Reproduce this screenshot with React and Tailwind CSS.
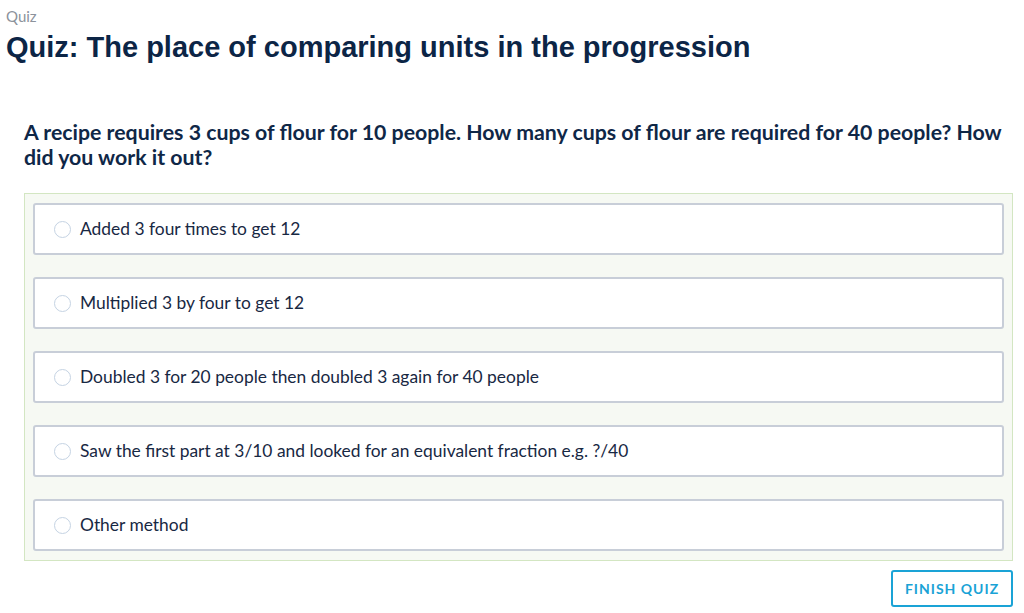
import React, { useState } from "react";

const options = [
  "Added 3 four times to get 12",
  "Multiplied 3 by four to get 12",
  "Doubled 3 for 20 people then doubled 3 again for 40 people",
  "Saw the first part at 3/10 and looked for an equivalent fraction e.g. ?/40",
  "Other method",
];

export default function App() {
  const [selected, setSelected] = useState(null);

  return (
    <div className="w-[1024px] h-[613px] bg-white overflow-hidden font-['Lato',sans-serif]">
      {/* Breadcrumb + title */}
      <div className="px-[6px] pt-[7px]">
        <div className="text-[15px] leading-[18px] text-[#8c939c]">Quiz</div>
        <h1 className="mt-[6px] font-['Liberation_Sans',Arial,sans-serif] font-bold text-[29px] leading-[32px] text-[#0c2546]">
          Quiz: The place of comparing units in the progression
        </h1>
      </div>

      {/* Question */}
      <p className="mt-[57px] px-[24px] pr-[18px] font-bold text-[21.3px] leading-[25px] text-[#0f2747]">
        A recipe requires 3 cups of flour for 10 people. How many cups of flour are required for 40 people? How did you work it out?
      </p>

      {/* Answers */}
      <div className="mt-[23px] ml-[24px] mr-[11px] border border-[#d3e6c2] bg-[#f6f9f3] px-[8px] py-[9px] flex flex-col gap-[22px]">
        {options.map((opt, i) => (
          <label
            key={i}
            onClick={() => setSelected(i)}
            className="h-[52px] flex items-center gap-[9px] pl-[19px] bg-white border-2 border-[#c8ced8] rounded-[3px] cursor-pointer"
          >
            <span className="w-[17px] h-[17px] rounded-full border border-[#c5d3e3] bg-white flex items-center justify-center">
              {selected === i && <span className="w-[9px] h-[9px] rounded-full bg-[#1aa3d6]" />}
            </span>
            <span className="text-[17.4px] text-[#182843]">{opt}</span>
          </label>
        ))}
      </div>

      {/* Footer */}
      <div className="flex justify-end mr-[11px] mt-[9px]">
        <button className="w-[122px] h-[37px] border-2 border-[#1aa3d6] rounded-[3px] text-[#1aa3d6] font-bold text-[14px] tracking-[1px]">
          FINISH QUIZ
        </button>
      </div>
    </div>
  );
}
